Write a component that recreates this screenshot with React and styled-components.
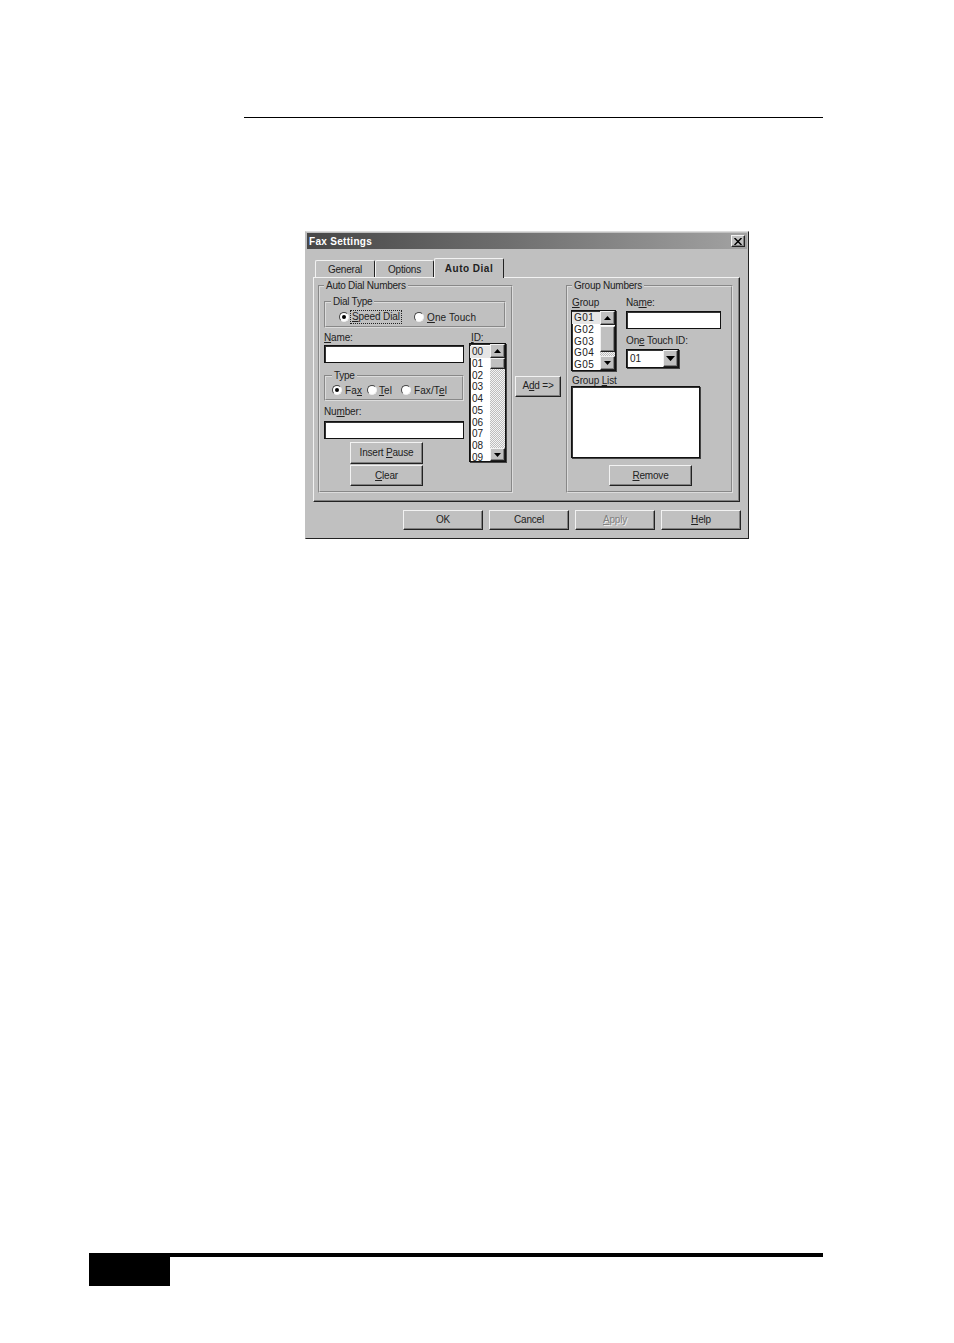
import React from 'react'
import styled, { createGlobalStyle, css } from 'styled-components'

const GlobalStyle = createGlobalStyle`
  html, body { margin: 0; padding: 0; background: #fff; }
  body { font-family: "Liberation Sans", Arial, sans-serif; font-size: 10px; color: #222; }
  u { text-underline-offset: 1px; }
`

const raised = css`
  border: 1px solid;
  border-color: #f2f2f2 #222 #222 #f2f2f2;
  box-shadow: inset -1px -1px 0 #808080;
`

const Page = styled.div`
  height: 1343px;
  box-sizing: border-box;
  padding-top: 117px;
  display: flex;
  flex-direction: column;
  overflow: hidden;
`
const TopRule = styled.div`
  width: 579px;
  height: 1px;
  margin-left: 244px;
  background: #000;
`
const Dialog = styled.div`
  width: 444px;
  height: 308px;
  box-sizing: border-box;
  margin: 113px 0 0 305px;
  padding: 1px;
  background: #c0c0c0;
  border: 1px solid;
  border-color: #dcdcdc #222 #222 #c0c0c0;
`
const TitleBar = styled.div`
  height: 16px;
  display: flex;
  align-items: center;
  justify-content: space-between;
  padding: 0 2px;
  background: linear-gradient(90deg, #474747 0%, #6e6e6e 45%, #a2a2a2 100%);
`
const TitleText = styled.span`
  color: #fff;
  font-weight: 700;
  font-size: 10px;
  letter-spacing: 0.3px;
`
const CloseButton = styled.div`
  ${raised}
  width: 14px;
  height: 12px;
  box-sizing: border-box;
  background: #c0c0c0;
  display: flex;
  align-items: center;
  justify-content: center;
`
const TabStrip = styled.div`
  height: 19px;
  margin-top: 9px;
  padding-left: 8px;
  display: flex;
  align-items: flex-end;
`
const Tab = styled.div`
  width: ${p => p.$width}px;
  height: ${p => (p.$active ? 20 : 17)}px;
  box-sizing: border-box;
  margin-bottom: ${p => (p.$active ? -1 : 0)}px;
  border: 1px solid;
  border-color: #f2f2f2 #222 transparent #f2f2f2;
  border-bottom: 0;
  border-radius: 2px 2px 0 0;
  background: #c0c0c0;
  position: relative;
  display: flex;
  align-items: center;
  justify-content: center;
  font-weight: ${p => (p.$active ? 700 : 400)};
  letter-spacing: ${p => (p.$active ? 0.5 : -0.2)}px;
`
const Panel = styled.div`
  width: 427px;
  height: 225px;
  box-sizing: border-box;
  margin-left: 6px;
  padding: 2px 0 0 4px;
  display: flex;
  align-items: flex-start;
  border: 1px solid;
  border-color: #f2f2f2 #222 #222 #f2f2f2;
  box-shadow: inset -1px -1px 0 #808080;
`
const Group = styled.fieldset`
  width: ${p => p.$width}px;
  height: ${p => p.$height}px;
  box-sizing: border-box;
  margin: ${p => p.$margin || 0};
  padding: ${p => p.$padding || 0};
  min-width: 0;
  border: 2px groove #dcdcdc;
`
const Legend = styled.legend`
  margin-left: ${p => p.$offset || 0}px;
  padding: 0 2px;
  line-height: 11px;
  font-size: 10px;
  letter-spacing: -0.25px;
`
const RadioRow = styled.div`
  display: flex;
  align-items: center;
  height: 14px;
`
const RadioOption = styled.label`
  width: ${p => p.$width}px;
  flex: none;
  display: flex;
  align-items: center;
  letter-spacing: 0.1px;
`
const RadioDot = styled.span`
  width: 10px;
  height: 10px;
  flex: none;
  box-sizing: border-box;
  margin-right: ${p => p.$space || 3}px;
  border-radius: 50%;
  background: #fff;
  border: 1px solid;
  border-color: #444 #f0f0f0 #f0f0f0 #444;
  display: flex;
  align-items: center;
  justify-content: center;
  &::after {
    content: '';
    width: 4px;
    height: 4px;
    border-radius: 50%;
    background: ${p => (p.$checked ? '#000' : 'transparent')};
  }
`
const Focused = styled.span`
  outline: 1px dotted #222;
  padding: 0 1px;
  line-height: 12px;
  letter-spacing: -0.1px;
`
const Columns = styled.div`
  display: flex;
  align-items: flex-start;
`
const Stack = styled.div`
  width: ${p => p.$width}px;
  margin: ${p => p.$margin || 0};
  flex: none;
`
const FieldLabel = styled.div`
  height: ${p => p.$height || 12}px;
  line-height: 12px;
  margin: ${p => p.$margin || 0};
  letter-spacing: -0.15px;
  white-space: nowrap;
`
const TextInput = styled.div`
  width: ${p => p.$width}px;
  height: 18px;
  box-sizing: border-box;
  background: #fff;
  border: 1px solid #111;
  box-shadow: inset 1px 1px 0 #333;
`
const Button = styled.button`
  ${raised}
  display: block;
  width: ${p => p.$width}px;
  height: ${p => p.$height || 21}px;
  box-sizing: border-box;
  margin: ${p => p.$margin || 0};
  padding: 0 0 ${p => (p.$lift ? 2 : 0)}px;
  background: #c0c0c0;
  font: 10px "Liberation Sans", Arial, sans-serif;
  letter-spacing: -0.2px;
  color: ${p => (p.$disabled ? '#808080' : '#222')};
  text-shadow: ${p => (p.$disabled ? '1px 1px 0 #eee' : 'none')};
`
const ListBox = styled.div`
  width: ${p => p.$width}px;
  height: ${p => p.$height}px;
  box-sizing: border-box;
  background: #fff;
  border: 1px solid #111;
  box-shadow: inset 1px 1px 0 #333, 1px 1px 0 #444;
  display: flex;
`
const ListItems = styled.div`
  flex: 1;
  min-width: 0;
  padding-top: ${p => p.$top}px;
`
const ListItem = styled.div`
  height: 11.78px;
  line-height: 11.78px;
  padding-left: 2px;
  font-size: 10px;
  letter-spacing: ${p => p.$spacing || 0}px;
  background: ${p => (p.$current ? '#e6e6e6' : 'transparent')};
`
const ScrollBar = styled.div`
  width: 15px;
  flex: none;
  display: flex;
  flex-direction: column;
`
const ScrollArrow = styled.div`
  ${raised}
  height: ${p => p.$height}px;
  flex: none;
  box-sizing: border-box;
  background: #c0c0c0;
  display: flex;
  align-items: center;
  justify-content: center;
`
const ScrollThumb = styled.div`
  ${raised}
  height: ${p => p.$height}px;
  flex: none;
  box-sizing: border-box;
  margin-top: ${p => p.$top || 0}px;
  background: #c0c0c0;
`
const ScrollTrack = styled.div`
  flex: 1;
  background: repeating-conic-gradient(#f4f4f4 0 25%, #bdbdbd 0 50%) 0 0 / 2px 2px;
`
const ComboBox = styled.div`
  width: 53px;
  height: 19px;
  box-sizing: border-box;
  background: #fff;
  border: 1px solid #111;
  box-shadow: inset 1px 1px 0 #333, 1px 1px 0 #444;
  padding-left: 3px;
  display: flex;
  align-items: center;
  justify-content: space-between;
`
const ComboArrow = styled(ScrollArrow)`
  width: 15px;
`
const Footer = styled.div`
  margin: 8px 0 0 96px;
  display: flex;
  gap: 6px;
`
const PageFooter = styled.div`
  margin: auto 0 57px 89px;
  width: 734px;
  border-top: 4px solid #000;
`
const PageTab = styled.div`
  width: 81px;
  height: 29px;
  background: #000;
`

const Triangle = ({ down, size = 7 }) => (
  <svg width={size} height={(size * 4) / 7} viewBox="0 0 7 4">
    <path d={down ? 'M0 0h7L3.5 4z' : 'M3.5 0L7 4H0z'} fill="#000" />
  </svg>
)

const Radio = ({ width, checked, space, children }) => (
  <RadioOption $width={width}>
    <RadioDot $checked={checked} $space={space} />
    {children}
  </RadioOption>
)

const List = ({ items, width, height, top, spacing, thumbTop, thumb, upHeight, downHeight }) => (
  <ListBox $width={width} $height={height}>
    <ListItems $top={top}>
      {items.map((item, i) => (
        <ListItem key={item} $current={i === 0} $spacing={spacing}>{item}</ListItem>
      ))}
    </ListItems>
    <ScrollBar>
      <ScrollArrow $height={upHeight}><Triangle /></ScrollArrow>
      <ScrollThumb $height={thumb} $top={thumbTop} />
      <ScrollTrack />
      <ScrollArrow $height={downHeight}><Triangle down /></ScrollArrow>
    </ScrollBar>
  </ListBox>
)

const ids = ['00', '01', '02', '03', '04', '05', '06', '07', '08', '09']
const groups = ['G01', 'G02', 'G03', 'G04', 'G05']

export default function App() {
  return (
    <Page>
      <GlobalStyle />
      <TopRule />
      <Dialog>
        <TitleBar>
          <TitleText>Fax Settings</TitleText>
          <CloseButton>
            <svg width="8" height="7" viewBox="0 0 8 7">
              <path d="M0.5 0L7.5 7M7.5 0L0.5 7" stroke="#000" strokeWidth="1.5" />
            </svg>
          </CloseButton>
        </TitleBar>
        <TabStrip>
          <Tab $width={60}>General</Tab>
          <Tab $width={59}>Options</Tab>
          <Tab $width={70} $active>Auto Dial</Tab>
        </TabStrip>
        <Panel>
          <Group $width={195} $height={213} $padding="5px 5px 0 4px">
            <Legend>Auto Dial Numbers</Legend>
            <Group $width={182} $height={32} $padding="3px 0 0 13px">
              <Legend $offset={-8}>Dial Type</Legend>
              <RadioRow>
                <Radio width={75} checked space={2}>
                  <Focused><u>S</u>peed Dial</Focused>
                </Radio>
                <Radio width={80}><span><u>O</u>ne Touch</span></Radio>
              </RadioRow>
            </Group>
            <Columns>
              <Stack $width={145}>
                <FieldLabel $height={13} $margin="4px 0 0"><u>N</u>ame:</FieldLabel>
                <TextInput $width={140} />
                <Group $width={140} $height={31} $margin="7px 0 0" $padding="2px 0 0 6px">
                  <Legend>Type</Legend>
                  <RadioRow>
                    <Radio width={35} checked><span>Fa<u>x</u></span></Radio>
                    <Radio width={34} space={2}><span><u>T</u>el</span></Radio>
                    <Radio width={50}><span>Fax/T<u>e</u>l</span></Radio>
                  </RadioRow>
                </Group>
                <FieldLabel $height={15} $margin="5px 0 0">Nu<u>m</u>ber:</FieldLabel>
                <TextInput $width={140} />
                <Button $width={73} $height={22} $margin="3px 0 1px 26px" $lift>Insert <u>P</u>ause</Button>
                <Button $width={73} $margin="0 0 0 26px"><u>C</u>lear</Button>
              </Stack>
              <Stack $width={37}>
                <FieldLabel $height={11} $margin="4px 0 0 2px"><u>I</u>D:</FieldLabel>
                <List items={ids} width={37} height={119} top={2} thumb={11} upHeight={14} downHeight={13} />
              </Stack>
            </Columns>
          </Group>
          <Button $width={46} $margin="96px 5px 0 2px" $lift>A<u>d</u>d =&gt;</Button>
          <Group $width={167} $height={213} $padding="5px 0 0 3px">
            <Legend $offset={1}>Group Numbers</Legend>
            <Columns>
              <Stack $width={55}>
                <FieldLabel $height={13} $margin="1px 0 0 1px"><u>G</u>roup</FieldLabel>
                <List items={groups} width={45} height={61} top={1} spacing={0.5} thumb={26} thumbTop={1} upHeight={14} downHeight={14} />
              </Stack>
              <Stack $width={96}>
                <FieldLabel $height={14} $margin="1px 0 0 0">Na<u>m</u>e:</FieldLabel>
                <TextInput $width={95} />
                <FieldLabel $height={14} $margin="6px 0 0 0">On<u>e</u> Touch ID:</FieldLabel>
                <ComboBox>
                  01
                  <ComboArrow $height={17}><Triangle down size={9} /></ComboArrow>
                </ComboBox>
              </Stack>
            </Columns>
            <FieldLabel $height={11} $margin="4px 0 0 1px">Group <u>L</u>ist</FieldLabel>
            <ListBox $width={129} $height={72} />
            <Button $width={83} $margin="7px 0 0 38px"><u>R</u>emove</Button>
          </Group>
        </Panel>
        <Footer>
          <Button $width={80} $height={20} $lift>OK</Button>
          <Button $width={80} $height={20} $lift>Cancel</Button>
          <Button $width={80} $height={20} $lift $disabled><u>A</u>pply</Button>
          <Button $width={80} $height={20} $lift><u>H</u>elp</Button>
        </Footer>
      </Dialog>
      <PageFooter><PageTab /></PageFooter>
    </Page>
  )
}
